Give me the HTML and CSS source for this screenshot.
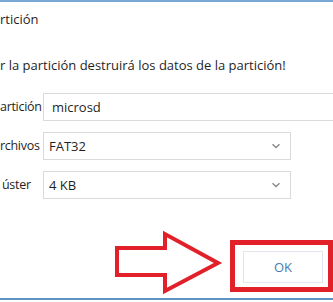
FILE: index.html
```html
<!DOCTYPE html>
<html lang="es">
<head>
<meta charset="utf-8">
<link rel="stylesheet" href="styles.css">
</head>
<body>
<div class="dialog">
  <div class="topline"></div>
  <div class="title">rtición</div>
  <div class="warning">r la partición destruirá los datos de la partición!</div>
  <div class="form">
    <div class="label">artición</div>
    <div class="field field-wide">microsd</div>
    <div class="label">rchivos</div>
    <div class="field field-select">FAT32
      <svg class="chev" width="10" height="6" viewBox="0 0 10 6"><path d="M1.5 1.2 L5 4.6 L8.5 1.2" fill="none" stroke="#8a8a8a" stroke-width="1.4"/></svg>
    </div>
    <div class="label label-indent">úster</div>
    <div class="field field-select">4 KB
      <svg class="chev" width="10" height="6" viewBox="0 0 10 6"><path d="M1.5 1.2 L5 4.6 L8.5 1.2" fill="none" stroke="#8a8a8a" stroke-width="1.4"/></svg>
    </div>
  </div>
  <div class="footer">
    <button class="ok">OK</button>
  </div>
  <div class="bottomline"></div>
</div>
<svg class="arrow" width="333" height="302" viewBox="0 0 333 302">
  <polygon points="117,248 165,248 165,234 218,263 165,291 165,275 117,275" fill="none" stroke="#e2202a" stroke-width="4" stroke-linejoin="miter"/>
</svg>
<div class="highlight"></div>
</body>
</html>
```
FILE: styles.css
```css
html, body {
  margin: 0;
  padding: 0;
}
body {
  width: 333px;
  height: 302px;
  overflow: hidden;
  background: #ffffff;
  font-family: "Open Sans", "Noto Sans", sans-serif;
  color: #1f1f1f;
  position: relative;
}
.dialog {
  display: flex;
  flex-direction: column;
  height: 302px;
}
.topline {
  height: 2px;
  background: #78a8d4;
}
.title {
  font-size: 13px;
  line-height: 20px;
  margin-top: 7px;
  height: 20px;
}
.warning {
  font-size: 13px;
  line-height: 20px;
  margin-top: 26px;
  height: 20px;
  white-space: nowrap;
}
.form {
  margin-top: 18px;
  display: grid;
  grid-template-columns: 43px 248px;
  grid-auto-rows: 28px;
  row-gap: 11px;
  align-items: center;
  font-size: 13px;
}
.label {
  white-space: nowrap;
  line-height: 28px;
  font-size: 12.5px;
  letter-spacing: -0.3px;
}
.label-indent {
  padding-left: 2px;
}
.field {
  box-sizing: border-box;
  height: 28px;
  border: 1px solid #dadada;
  display: flex;
  align-items: center;
  padding-left: 5px;
  position: relative;
  background: #ffffff;
}
.field-wide {
  width: 300px;
  padding-left: 8px;
}
.field-select {
  justify-content: space-between;
  padding-right: 9px;
}
.chev {
  display: block;
}
.footer {
  margin-top: 52px;
  display: flex;
  justify-content: flex-end;
  padding-right: 10px;
}
.ok {
  width: 80px;
  height: 32px;
  box-sizing: border-box;
  border: 1px solid #e1e6ec;
  background: #ffffff;
  color: #4b78ad;
  font-family: "Open Sans", "Noto Sans", sans-serif;
  font-size: 13px;
  padding: 0;
}
.bottomline {
  margin-top: 15px;
  height: 2px;
  background: #5f93c2;
}
.arrow {
  position: absolute;
  left: 0;
  top: 0;
}
.highlight {
  position: absolute;
  left: 230px;
  top: 240px;
  width: 103px;
  height: 52px;
  box-sizing: border-box;
  border: 5px solid #e2202a;
}
```
